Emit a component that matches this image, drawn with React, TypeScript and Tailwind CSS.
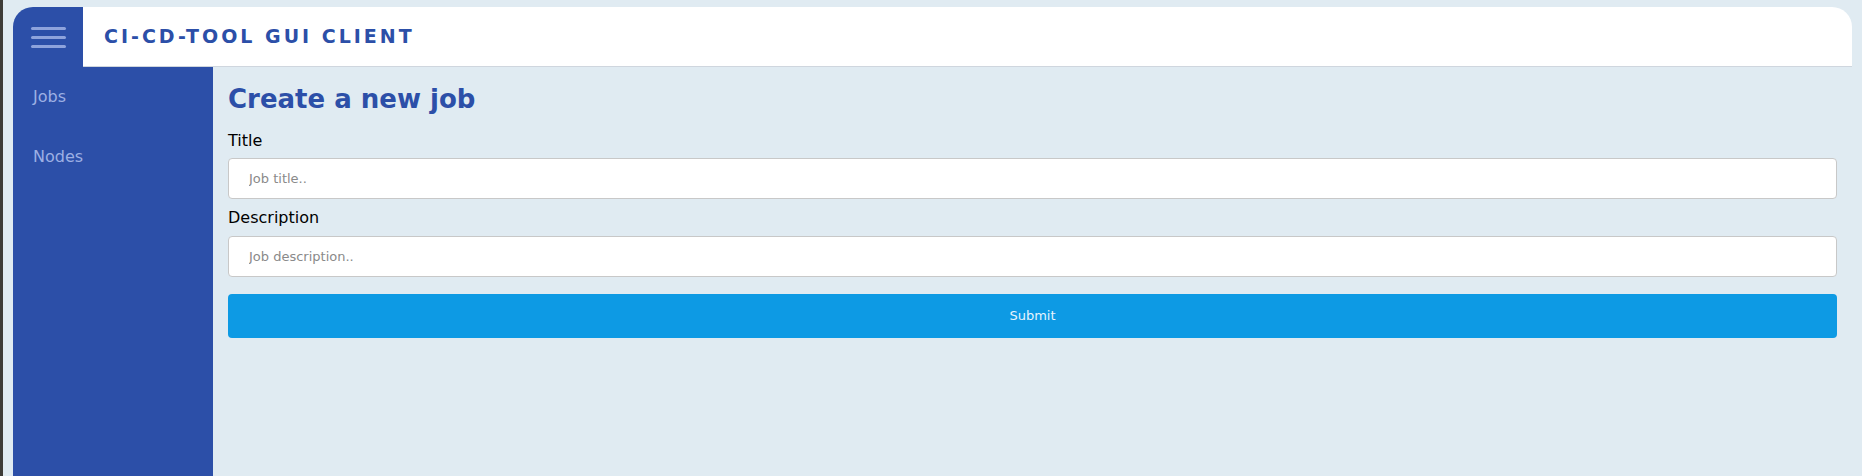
import React, { useState } from 'react';

export default function App() {
  const [title, setTitle] = useState('');
  const [description, setDescription] = useState('');

  return (
    <div className="flex h-[476px] w-full overflow-hidden bg-[#e0ebf2] font-['DejaVu_Sans',sans-serif]">
      <div className="w-[3px] shrink-0 bg-[#3d3c38]" />
      <div className="ml-[10px] mt-[7px] flex w-[1839px] flex-col">
        <header className="flex h-[60px] shrink-0">
          <button className="flex w-[70px] flex-col items-center justify-center gap-[6px] rounded-tl-[20px] bg-[#2c4fa8]">
            <span className="block h-[3px] w-[35px] rounded-full bg-[#8ea3dc]" />
            <span className="block h-[3px] w-[35px] rounded-full bg-[#8ea3dc]" />
            <span className="block h-[3px] w-[35px] rounded-full bg-[#8ea3dc]" />
          </button>
          <div className="flex flex-1 items-center rounded-tr-[20px] border-b border-[#cfd6de] bg-white pl-[21px]">
            <h1 className="text-[19px] font-bold tracking-[3px] text-[#2c4fa8]">CI-CD-TOOL GUI CLIENT</h1>
          </div>
        </header>

        <div className="flex flex-1">
          <nav className="flex w-[200px] shrink-0 flex-col gap-[40px] bg-[#2c4fa8] pl-[20px] pt-[20px] text-[16px] leading-[20px] text-[#9db0e4]">
            <a href="#">Jobs</a>
            <a href="#">Nodes</a>
          </nav>

          <main className="flex-1 px-[15px] pt-[16px]">
            <h2 className="text-[26px] font-bold leading-[32px] text-[#2c4fa8]">Create a new job</h2>
            <form className="flex flex-col" onSubmit={(e) => e.preventDefault()}>
              <label className="mt-[16px] text-[16px] leading-[20px] text-black">Title</label>
              <input
                value={title}
                onChange={(e) => setTitle(e.target.value)}
                placeholder="Job title.."
                className="mt-[7px] h-[41px] rounded-[4px] border border-[#c8c8c8] bg-white px-[20px] text-[13px] outline-none placeholder:text-[#8a8a8a]"
              />
              <label className="mt-[9px] text-[16px] leading-[20px] text-black">Description</label>
              <input
                value={description}
                onChange={(e) => setDescription(e.target.value)}
                placeholder="Job description.."
                className="mt-[8px] h-[41px] rounded-[4px] border border-[#c8c8c8] bg-white px-[20px] text-[13px] outline-none placeholder:text-[#8a8a8a]"
              />
              <button
                type="submit"
                className="mt-[17px] h-[44px] rounded-[4px] bg-[#0d9ae4] text-[13px] text-[#e6f4fd]"
              >
                Submit
              </button>
            </form>
          </main>
        </div>
      </div>
    </div>
  );
}
